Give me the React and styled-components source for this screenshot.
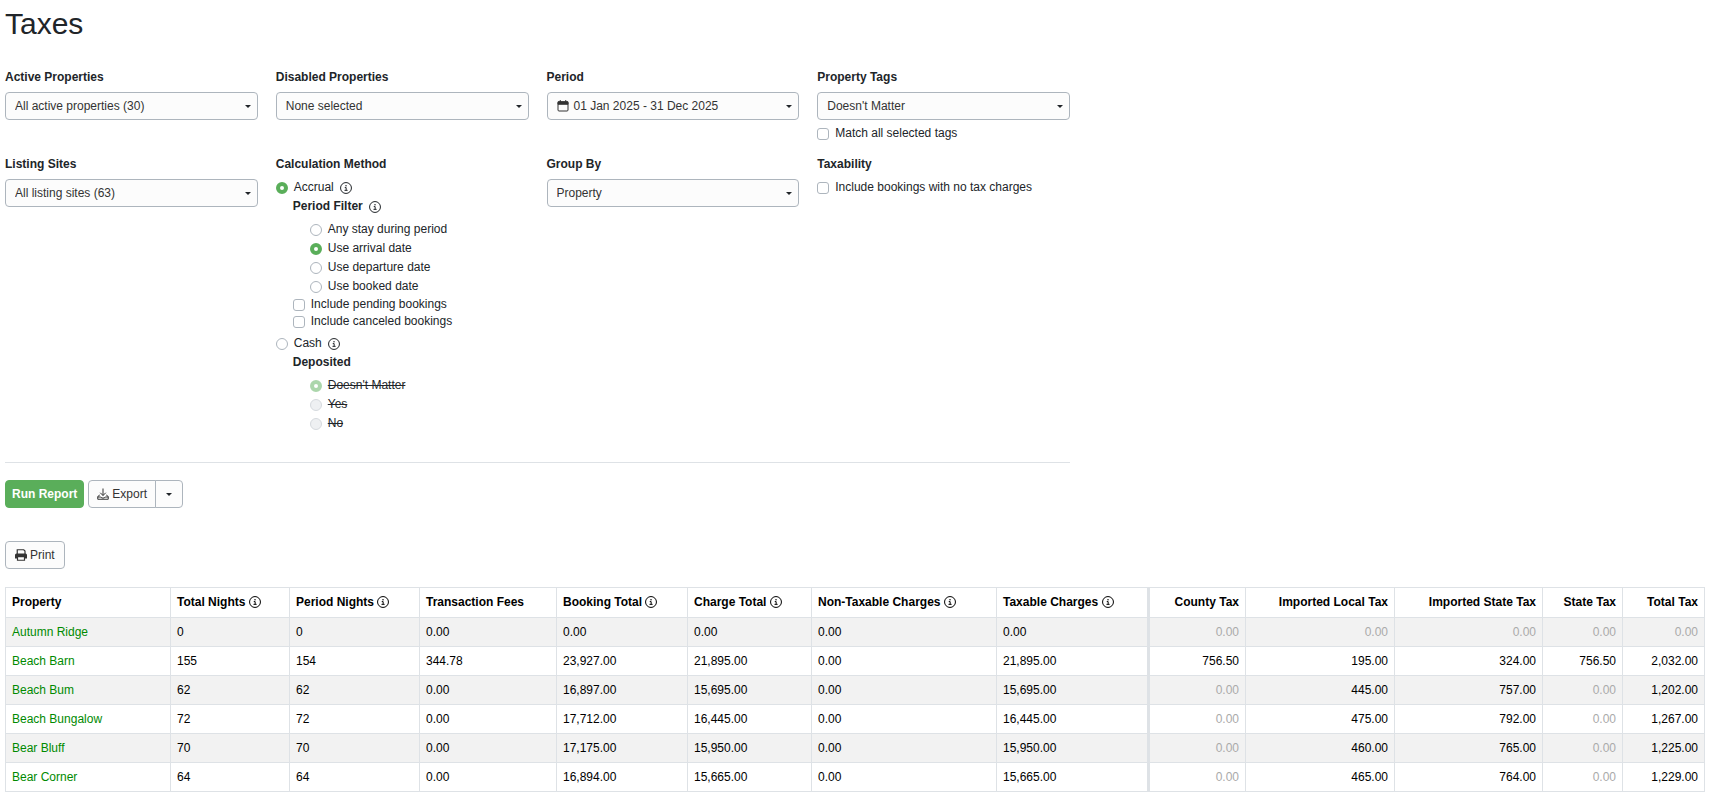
import React from 'react'
import styled, { createGlobalStyle } from 'styled-components'

const GlobalStyle = createGlobalStyle`
  *, *::before, *::after {
    box-sizing: border-box;
  }
  body {
    margin: 0;
    background: #FFF;
    color: #212529;
    font: 12px/18px "Liberation Sans", Arial, Helvetica, sans-serif;
  }
  button, select, input {
    font: inherit;
    color: inherit;
  }
`

const Page = styled.main`
  padding: 4px 5px 0;
`

const Title = styled.h1`
  margin: 0 0 24px;
  font-size: 30px;
  line-height: 40px;
  font-weight: 400;
`

const Filters = styled.form`
  max-width: 1065px;
`

const FilterGrid = styled.div`
  display: grid;
  grid-template-columns: repeat(4, 1fr);
  column-gap: 18px;
  row-gap: 13px;
  padding-bottom: 29px;
  border-bottom: 1px solid #DEE2E6;
`

const Field = styled.div`
  min-width: 0;
  min-height: 74px;
`

const FieldLabel = styled.label`
  display: block;
  font-weight: 700;
  margin-bottom: 6px;
`

const Heading = styled.div`
  display: flex;
  align-items: center;
  gap: 6px;
  font-weight: 700;
  line-height: 19px;
`

const Control = styled.div`
  position: relative;
  display: flex;
  align-items: center;

  &::after {
    content: '';
    position: absolute;
    right: 7px;
    border: 3px solid transparent;
    border-top-color: #212529;
    border-bottom: 0;
    pointer-events: none;
  }
`

const Select = styled.select`
  appearance: none;
  width: 100%;
  height: 28px;
  padding: 0 20px 0 9px;
  border: 1px solid #ADB5BD;
  border-radius: 4px;
  background: #FCFCFC;
  color: #333;
`

const Button = styled.button`
  display: inline-flex;
  align-items: center;
  gap: 3px;
  height: 28px;
  padding: 0 9px;
  border: 1px solid #ADB5BD;
  border-radius: 4px;
  background: #FCFCFC;
  color: #333;
  cursor: pointer;
`

const PeriodButton = styled(Button)`
  width: 100%;
  gap: 5px;
`

const PrimaryButton = styled(Button)`
  padding: 0 6px;
  border-color: #5AAE5A;
  background: #5AAE5A;
  color: #FFF;
  font-weight: 700;
`

const ExportButton = styled(Button)`
  padding: 0 8px;
  border-radius: 4px 0 0 4px;
`

const ToggleButton = styled(Button)`
  justify-content: center;
  width: 28px;
  margin-left: -1px;
  padding: 0;
  border-radius: 0 4px 4px 0;

  &::after {
    content: '';
    border: 3px solid transparent;
    border-top-color: #212529;
    border-bottom: 0;
  }
`

const ButtonGroup = styled.div`
  display: inline-flex;
`

const Toolbar = styled.div`
  display: flex;
  gap: 4px;
  padding: 17px 0 33px;
`

const Option = styled.div`
  display: flex;
  align-items: center;
  gap: 6px;
  line-height: ${props => (props.$tight ? '17px' : '19px')};

  & > label {
    display: flex;
    align-items: center;
    gap: 6px;
    text-decoration: ${props => (props.$struck ? 'line-through' : 'none')};
  }
`

const Check = styled.input`
  appearance: none;
  width: 12px;
  height: 12px;
  margin: 0;
  border: 1px solid #ADB5BD;
  border-radius: 3px;
  background: #FFF;
`

const Radio = styled(Check)`
  border-radius: 50%;

  &:checked {
    border: 4px solid #5AAE5A;
  }
  &:disabled {
    opacity: 0.5;
  }
  &:disabled:not(:checked) {
    background: #DEE2E6;
  }
`

const Nested = styled.div`
  padding-left: 17px;
`

const Choices = styled(Nested)`
  padding-top: 4px;
`

const MethodField = styled(Field)`
  & > ${FieldLabel} {
    margin-bottom: 5px;
  }
`

const CashGroup = styled.div`
  padding-top: 4px;
`

const TagMatch = styled.div`
  padding-top: 5px;
`

const Table = styled.table`
  width: 100%;
  margin-top: 18px;
  table-layout: fixed;
  border-collapse: collapse;
  color: #000;
`

const Cell = styled.td`
  padding: 5px 6px;
  border: 1px solid #DEE2E6;
  border-left-width: ${props => (props.$divider ? '3px' : '1px')};
  text-align: ${props => (props.$right ? 'right' : 'left')};
  color: ${props => (props.$muted ? '#AAA' : 'inherit')};
  white-space: nowrap;
`

const HeadCell = styled(Cell)`
  padding-bottom: 6px;
  font-weight: 700;
`

const Row = styled.tr`
  &:nth-child(odd) {
    background: #F2F2F2;
  }
`

const PropertyLink = styled.a`
  color: #008A00;
  text-decoration: none;
`

const Icon = styled.svg`
  flex: none;
  width: 12px;
  height: 12px;
  vertical-align: -2px;
  fill: none;
  stroke: currentColor;
`

const InfoIcon = () => (
  <Icon viewBox="0 0 24 24" strokeWidth="2" aria-hidden="true">
    <circle cx="12" cy="12" r="10.9" />
    <path d="M9.5 11.2H12.3V16.5M9 16.7H15.2" />
    <circle cx="12" cy="7.4" r="1.5" fill="currentColor" stroke="none" />
  </Icon>
)

const CalendarIcon = () => (
  <Icon viewBox="0 0 24 24" strokeWidth="2" aria-hidden="true">
    <rect x="2" y="4" width="20" height="18" rx="2" />
    <path d="M2 3.5h20v5H2zM6.5 0v4M17.5 0v4" fill="currentColor" />
  </Icon>
)

const ExportIcon = () => (
  <Icon viewBox="0 0 24 24" strokeWidth="2" aria-hidden="true">
    <path d="M12 1v14M6.5 9.5l5.5 5.5 5.5-5.5" />
    <path d="M5.5 14L1.5 17v5.5h21V17l-4-3M1.5 18h6l2 2h5l2-2h6" />
  </Icon>
)

const PrintIcon = () => (
  <Icon viewBox="0 0 24 24" strokeWidth="2.4" aria-hidden="true">
    <path d="M4.5 10V1.5h13l2.5 2.5v6" />
    <path d="M3 9h18a3 3 0 0 1 3 3v7h-4v-3H4v3H0v-7A3 3 0 0 1 3 9z" fill="currentColor" stroke="none" />
    <path d="M5 15.5h14v7H5z" />
  </Icon>
)

const columns = [
  { label: 'Property', width: 165 },
  { label: 'Total Nights', width: 119, info: true },
  { label: 'Period Nights', width: 130, info: true },
  { label: 'Transaction Fees', width: 137 },
  { label: 'Booking Total', width: 131, info: true },
  { label: 'Charge Total', width: 124, info: true },
  { label: 'Non-Taxable Charges', width: 185, info: true },
  { label: 'Taxable Charges', width: 152, info: true },
  { label: 'County Tax', width: 97, tax: true, divider: true },
  { label: 'Imported Local Tax', width: 149, tax: true },
  { label: 'Imported State Tax', width: 148, tax: true },
  { label: 'State Tax', width: 80, tax: true },
  { label: 'Total Tax', width: 82, tax: true }
]

const rows = [
  ['Autumn Ridge', '0', '0', '0.00', '0.00', '0.00', '0.00', '0.00', '0.00', '0.00', '0.00', '0.00', '0.00'],
  ['Beach Barn', '155', '154', '344.78', '23,927.00', '21,895.00', '0.00', '21,895.00', '756.50', '195.00', '324.00', '756.50', '2,032.00'],
  ['Beach Bum', '62', '62', '0.00', '16,897.00', '15,695.00', '0.00', '15,695.00', '0.00', '445.00', '757.00', '0.00', '1,202.00'],
  ['Beach Bungalow', '72', '72', '0.00', '17,712.00', '16,445.00', '0.00', '16,445.00', '0.00', '475.00', '792.00', '0.00', '1,267.00'],
  ['Bear Bluff', '70', '70', '0.00', '17,175.00', '15,950.00', '0.00', '15,950.00', '0.00', '460.00', '765.00', '0.00', '1,225.00'],
  ['Bear Corner', '64', '64', '0.00', '16,894.00', '15,665.00', '0.00', '15,665.00', '0.00', '465.00', '764.00', '0.00', '1,229.00']
]

const SelectField = ({ id, label, value, children }) => (
  <Field>
    <FieldLabel htmlFor={id}>{label}</FieldLabel>
    <Control>
      <Select id={id}>
        <option>{value}</option>
      </Select>
    </Control>
    {children}
  </Field>
)

const CheckOption = ({ label, tight }) => (
  <Option $tight={tight}>
    <label><Check type="checkbox" />{label}</label>
  </Option>
)

const RadioOption = ({ name, label, checked, disabled, info }) => (
  <Option $struck={disabled}>
    <label>
      <Radio type="radio" name={name} defaultChecked={checked} disabled={disabled} />
      {label}
    </label>
    {info && <InfoIcon />}
  </Option>
)

const ReportTable = () => (
  <Table>
    <colgroup>
      {columns.map(col => <col key={col.label} style={{ width: col.width }} />)}
    </colgroup>
    <thead>
      <tr>
        {columns.map(col => (
          <HeadCell as="th" key={col.label} $right={col.tax} $divider={col.divider}>
            {col.label} {col.info && <InfoIcon />}
          </HeadCell>
        ))}
      </tr>
    </thead>
    <tbody>
      {rows.map(row => (
        <Row key={row[0]}>
          {row.map((value, i) => (
            <Cell
              key={columns[i].label}
              $right={columns[i].tax}
              $divider={columns[i].divider}
              $muted={columns[i].tax && value === '0.00'}
            >
              {i === 0 ? <PropertyLink href="#">{value}</PropertyLink> : value}
            </Cell>
          ))}
        </Row>
      ))}
    </tbody>
  </Table>
)

const App = () => (
  <Page>
    <GlobalStyle />
    <Title>Taxes</Title>
    <Filters>
      <FilterGrid>
        <SelectField id="active" label="Active Properties" value="All active properties (30)" />
        <SelectField id="disabled" label="Disabled Properties" value="None selected" />
        <Field>
          <FieldLabel htmlFor="period">Period</FieldLabel>
          <Control>
            <PeriodButton id="period" type="button">
              <CalendarIcon />
              01 Jan 2025 - 31 Dec 2025
            </PeriodButton>
          </Control>
        </Field>
        <SelectField id="tags" label="Property Tags" value="Doesn't Matter">
          <TagMatch>
            <CheckOption label="Match all selected tags" tight />
          </TagMatch>
        </SelectField>
        <SelectField id="sites" label="Listing Sites" value="All listing sites (63)" />
        <MethodField>
          <FieldLabel as="div">Calculation Method</FieldLabel>
          <RadioOption name="method" label="Accrual" checked info />
          <Nested>
            <Heading>Period Filter <InfoIcon /></Heading>
            <Choices>
              <RadioOption name="filter" label="Any stay during period" />
              <RadioOption name="filter" label="Use arrival date" checked />
              <RadioOption name="filter" label="Use departure date" />
              <RadioOption name="filter" label="Use booked date" />
            </Choices>
            <CheckOption label="Include pending bookings" tight />
            <CheckOption label="Include canceled bookings" tight />
          </Nested>
          <CashGroup>
            <RadioOption name="method" label="Cash" info />
            <Nested>
              <Heading>Deposited</Heading>
              <Choices>
                <RadioOption name="deposited" label="Doesn't Matter" checked disabled />
                <RadioOption name="deposited" label="Yes" disabled />
                <RadioOption name="deposited" label="No" disabled />
              </Choices>
            </Nested>
          </CashGroup>
        </MethodField>
        <SelectField id="group" label="Group By" value="Property" />
        <MethodField>
          <FieldLabel as="div">Taxability</FieldLabel>
          <CheckOption label="Include bookings with no tax charges" />
        </MethodField>
      </FilterGrid>
      <Toolbar>
        <PrimaryButton type="button">Run Report</PrimaryButton>
        <ButtonGroup>
          <ExportButton type="button"><ExportIcon />Export</ExportButton>
          <ToggleButton type="button" aria-label="Export options" />
        </ButtonGroup>
      </Toolbar>
    </Filters>
    <Button type="button"><PrintIcon />Print</Button>
    <ReportTable />
  </Page>
)

export default App
